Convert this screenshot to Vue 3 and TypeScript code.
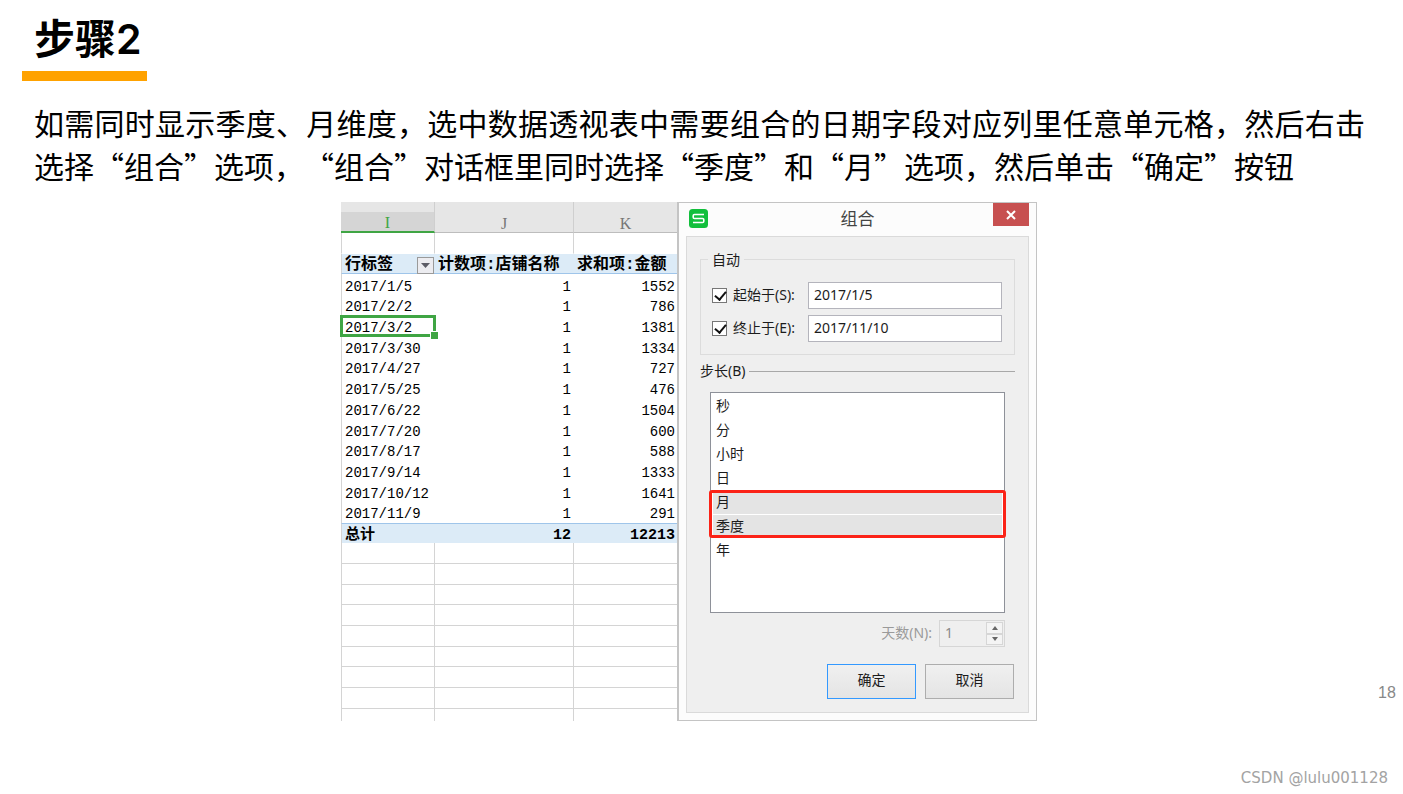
<script setup lang="ts">
import { ref } from 'vue'

interface PivotRow {
  label: string
  count: number
  amount: number
}

const rows: PivotRow[] = [
  { label: '2017/1/5', count: 1, amount: 1552 },
  { label: '2017/2/2', count: 1, amount: 786 },
  { label: '2017/3/2', count: 1, amount: 1381 },
  { label: '2017/3/30', count: 1, amount: 1334 },
  { label: '2017/4/27', count: 1, amount: 727 },
  { label: '2017/5/25', count: 1, amount: 476 },
  { label: '2017/6/22', count: 1, amount: 1504 },
  { label: '2017/7/20', count: 1, amount: 600 },
  { label: '2017/8/17', count: 1, amount: 588 },
  { label: '2017/9/14', count: 1, amount: 1333 },
  { label: '2017/10/12', count: 1, amount: 1641 },
  { label: '2017/11/9', count: 1, amount: 291 },
]
const activeCell = '2017/3/2'

const units: string[] = ['秒', '分', '小时', '日', '月', '季度', '年']
const selected = ref<string[]>(['月', '季度'])
const useStart = ref(true)
const useEnd = ref(true)
const start = ref('2017/1/5')
const end = ref('2017/11/10')
const days = ref('1')
</script>

<template>
  <main class="slide">
    <h1 class="title">步骤2</h1>
    <p class="intro">如需同时显示季度、月维度，选中数据透视表中需要组合的日期字段对应列里任意单元格，然后右击选择“组合”选项，“组合”对话框里同时选择“季度”和“月”选项，然后单击“确定”按钮</p>

    <div class="stage">
      <div class="figure">
        <table class="sheet">
          <colgroup>
            <col class="col-i" />
            <col class="col-j" />
            <col class="col-k" />
          </colgroup>
          <thead>
            <tr class="letters">
              <th class="current">I</th>
              <th>J</th>
              <th>K</th>
            </tr>
          </thead>
          <tbody>
            <tr class="blank"><td>&nbsp;</td><td></td><td></td></tr>
            <tr class="fields">
              <th>
                <div class="field">
                  行标签
                  <button class="filter" type="button" aria-label="筛选">
                    <svg viewBox="0 0 9 5" width="9" height="5"><path d="M0 0H9L4.500 5Z" fill="#5c5c66" /></svg>
                  </button>
                </div>
              </th>
              <th>计数项:店铺名称</th>
              <th>求和项:金额</th>
            </tr>
            <tr v-for="row in rows" :key="row.label" class="data">
              <td :class="{ active: row.label === activeCell }">{{ row.label }}</td>
              <td>{{ row.count }}</td>
              <td>{{ row.amount }}</td>
            </tr>
            <tr class="total">
              <th>总计</th>
              <td>12</td>
              <td>12213</td>
            </tr>
            <tr v-for="n in 8" :key="n" class="empty"><td>&nbsp;</td><td></td><td></td></tr>
            <tr class="cut"><td></td><td></td><td></td></tr>
          </tbody>
        </table>

        <section class="dialog" role="dialog" aria-labelledby="dialog-title">
          <header class="bar">
            <svg class="logo" viewBox="0 0 19 19" width="19" height="19">
              <rect width="19" height="19" rx="3.500" fill="#12bf3c" />
              <path d="M15 5.500H5.500Q4.200 5.500 4.200 6.800V8.200Q4.200 9.500 5.500 9.500H13.500Q14.800 9.500 14.800 10.800V12.200Q14.800 13.500 13.500 13.500H4" fill="none" stroke="#fff" stroke-width="1.600" />
            </svg>
            <h2 id="dialog-title">组合</h2>
            <button class="close" type="button" aria-label="关闭">
              <svg viewBox="0 0 10 10" width="10" height="10"><path d="M1 1L9 9M9 1L1 9" stroke="#fff" stroke-width="2" /></svg>
            </button>
          </header>

          <form class="panel" @submit.prevent>
            <fieldset class="auto">
              <legend>自动</legend>
              <div class="line">
                <input id="use-start" v-model="useStart" type="checkbox" />
                <label for="use-start">起始于(S):</label>
                <input v-model="start" class="text" type="text" aria-label="起始于" />
              </div>
              <div class="line">
                <input id="use-end" v-model="useEnd" type="checkbox" />
                <label for="use-end">终止于(E):</label>
                <input v-model="end" class="text" type="text" aria-label="终止于" />
              </div>
            </fieldset>

            <label class="step" for="units">步长(B)</label>
            <div class="list">
              <select id="units" v-model="selected" multiple size="7">
                <option v-for="unit in units" :key="unit" :value="unit">{{ unit }}</option>
              </select>
              <span class="mark"></span>
            </div>

            <div class="days">
              <label for="days">天数(N):</label>
              <div class="spinner">
                <input id="days" v-model="days" type="text" disabled />
                <div class="arrows">
                  <button type="button" disabled aria-label="增加">
                    <svg viewBox="0 0 6 4" width="6" height="4"><path d="M0 4H6L3 0Z" fill="#666" /></svg>
                  </button>
                  <button type="button" disabled aria-label="减少">
                    <svg viewBox="0 0 6 4" width="6" height="4"><path d="M0 0H6L3 4Z" fill="#666" /></svg>
                  </button>
                </div>
              </div>
            </div>

            <div class="actions">
              <button class="primary" type="submit">确定</button>
              <button type="button">取消</button>
            </div>
          </form>
        </section>
      </div>
      <span class="page">18</span>
    </div>

    <footer class="credit">CSDN @lulu001128</footer>
  </main>
</template>

<style>
body {
  margin: 0;
  background: #fff;
}
</style>

<style scoped>
* {
  box-sizing: border-box;
}

.slide {
  color: #000;
  font-family: "Noto Sans CJK SC", sans-serif;
}

.title {
  width: max-content;
  margin: 0 0 20px 22px;
  padding: 8px 5px 0 12px;
  border-bottom: 10px solid #ffa200;
  font-family: Inter, "Noto Sans CJK SC", sans-serif;
  font-size: 41px;
  font-weight: 600;
  line-height: 63px;
}

.intro {
  margin: 0 38px 15px 34px;
  font-size: 30px;
  line-height: 43px;
  text-align: justify;
  text-spacing-trim: space-all;
}

.stage {
  display: grid;
  grid-template-columns: minmax(0, 1fr) auto minmax(0, 1fr) 17px;
  padding-right: 8px;
}

.figure {
  grid-column: 2;
  display: flex;
}

.page {
  grid-column: 4;
  align-self: end;
  margin-bottom: 18px;
  color: #888;
  font: 16px/20px "Liberation Sans", sans-serif;
  text-align: right;
}

.credit {
  margin: 47px 15px 0 0;
  color: #a3a3a3;
  font: 15px/20px "DejaVu Sans", sans-serif;
  text-align: right;
}

/* Spreadsheet */
.sheet {
  width: 337px;
  height: 519px;
  border-collapse: separate;
  border-spacing: 0;
  table-layout: fixed;
  font: 14px/15px "Liberation Mono", "Noto Sans CJK SC", monospace;
}

.col-i {
  width: 94px;
}

.col-j {
  width: 139px;
}

.sheet th,
.sheet td {
  padding: 4px 3px 0;
  white-space: nowrap;
}

.sheet td:first-child,
.sheet tbody th:first-child {
  border-left: 1px solid #d4d4d4;
}

.sheet .letters th {
  height: 30px;
  padding: 13px 0 0;
  border-right: 1px solid #cfcfcf;
  border-bottom: 1px solid #bdbdbd;
  background: #e6e6e6;
  color: #777;
  font: 16px/16px "Liberation Serif", serif;
}

.sheet .letters .current {
  border-bottom: 2px solid #3fa544;
  background: linear-gradient(#e6e6e6 10px, #d5d5d5 10px);
  color: #3fa544;
}

.blank td,
.empty td {
  border-bottom: 1px solid #d4d4d4;
}

.sheet .blank td {
  border-bottom-color: #fff;
}

.blank td,
.empty td,
.cut td {
  border-right: 1px solid #d4d4d4;
}

.blank td:last-child,
.empty td:last-child,
.cut td:last-child {
  border-right: 0;
}

.sheet .cut td {
  height: 12px;
}

.sheet .data td {
  padding-top: 5px;
}

.sheet .fields th {
  padding-top: 4px;
  border-bottom: 1px solid #9fc5ea;
  background: #dcebf7;
  font-size: 16px;
  text-align: left;
}

.field {
  display: flex;
  align-items: center;
  justify-content: space-between;
  height: 15px;
}

.filter {
  display: grid;
  place-items: center;
  width: 17px;
  height: 17px;
  margin-right: -2px;
  padding: 0;
  border: 1px solid #9a9a9a;
  background: #ececf0;
}

.data td + td,
.total td {
  text-align: right;
}

.data .active {
  position: relative;
  outline: 3px solid #3fa544;
  outline-offset: -2px;
}

.data .active::after {
  content: "";
  position: absolute;
  right: -3px;
  bottom: -3px;
  width: 7px;
  height: 7px;
  border: 1px solid #fff;
  border-right: 0;
  border-bottom: 0;
  background: #3fa544;
}

.total th,
.total td {
  border-top: 1px solid #9fc5ea;
  background: #dcebf7;
  font-size: 15px;
  font-weight: 700;
}

.total th {
  text-align: left;
}

/* Dialog */
.dialog {
  display: flex;
  flex-direction: column;
  width: 360px;
  margin-left: -1px;
  padding: 0 7px 7px;
  border: 1px solid #c4c4c4;
  border-left-width: 2px;
  background: #fcfcfc;
  color: #1c1c1c;
  font-family: "Noto Sans", "Noto Sans CJK SC", sans-serif;
  font-size: 14px;
  line-height: 20px;
}

.bar {
  display: grid;
  grid-template-columns: 36px 1fr 36px;
  height: 33px;
}

.logo {
  margin: 6px 0 0 3px;
}

.bar h2 {
  margin: 0;
  color: #444;
  font-size: 17px;
  font-weight: 400;
  line-height: 32px;
  text-align: center;
}

.close {
  display: grid;
  place-items: center;
  height: 23px;
  padding: 0;
  border: 0;
  background: #c75050;
}

.panel {
  flex: 1;
  padding: 13px 13px 0;
  border: 1px solid #dadada;
  background: #efefef;
}

.auto {
  min-width: 0;
  margin: 0;
  padding: 13px 12px 12px 11px;
  border: 1px solid #dcdcdc;
}

.auto legend {
  margin-left: -4px;
  padding: 0 4px;
  line-height: 19px;
}

.line {
  display: flex;
  align-items: center;
}

.line + .line {
  margin-top: 6px;
}

.line input[type="checkbox"] {
  flex: none;
  appearance: none;
  width: 15px;
  height: 15px;
  margin: 0 6px 0 0;
  border: 1px solid #777;
  background: #fff;
}

.line input[type="checkbox"]:checked::before {
  content: "";
  display: block;
  width: 5px;
  height: 9px;
  margin: 0 0 0 4px;
  border: solid #111;
  border-width: 0 2px 2px 0;
  transform: rotate(40deg);
}

.line label {
  flex: none;
  width: 75px;
  padding-bottom: 2px;
}

.text {
  flex: 1;
  min-width: 0;
  height: 27px;
  padding: 0 5px 2px;
  border: 1px solid #b4b4bc;
  background: #fff;
  color: #1c1c1c;
  font: inherit;
}

.step {
  display: flex;
  align-items: center;
  gap: 3px;
  margin-top: 6px;
}

.step::after {
  content: "";
  flex: 1;
  height: 1px;
  background: #a8a8a8;
}

.list {
  position: relative;
  margin: 11px 10px 7px;
}

.list select {
  display: block;
  width: 100%;
  height: 221px;
  padding: 2px;
  border: 1px solid #8e9199;
  border-radius: 0;
  outline: 0;
  background: #fff;
  color: #1c1c1c;
  font: inherit;
  overflow: hidden;
}

.list option {
  height: 24px;
  min-height: 24px;
  padding: 0 3px;
  border-bottom: 1px solid #fff;
  line-height: 23px;
}

.list option:checked {
  background: #e4e4e4;
  color: #1c1c1c;
}

.mark {
  position: absolute;
  top: 98px;
  left: -1px;
  right: -1px;
  height: 48px;
  border: 3px solid #fb2317;
  border-radius: 3px;
  pointer-events: none;
}

.days {
  display: flex;
  align-items: center;
  justify-content: flex-end;
  gap: 7px;
  margin-right: 10px;
  color: #9a9a9a;
}

.days label {
  padding-bottom: 2px;
}

.spinner {
  display: flex;
  width: 66px;
  height: 27px;
  padding: 1px;
  border: 1px solid #d6d6d6;
}

.spinner input {
  flex: 1;
  min-width: 0;
  padding: 0 4px 2px;
  border: 0;
  background: transparent;
  color: #8a8a8a;
  font: inherit;
}

.arrows {
  display: flex;
  flex-direction: column;
  width: 17px;
}

.arrows button {
  display: grid;
  flex: 1;
  place-items: center;
  padding: 0;
  border: 1px solid #d6d6d6;
  background: #f4f4f4;
}

.actions {
  display: flex;
  justify-content: flex-end;
  gap: 9px;
  margin: 17px 1px 0 0;
}

.actions button {
  width: 89px;
  height: 35px;
  padding: 0 0 3px;
  border: 1px solid #adadad;
  background: linear-gradient(#f0f0f0, #e4e4e4);
  color: #1c1c1c;
  font: inherit;
}

.actions .primary {
  border: 1px solid #3399ff;
}
</style>
